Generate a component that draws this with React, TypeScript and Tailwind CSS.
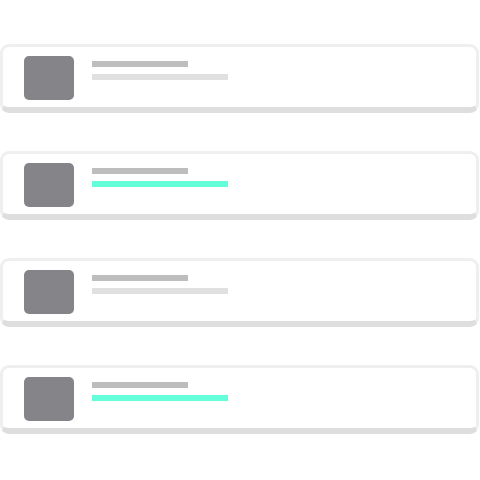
const ROWS = [
  { accent: false },
  { accent: true },
  { accent: false },
  { accent: true },
];

function SkeletonCard({ accent }: { accent: boolean }) {
  return (
    <div className="flex w-[479px] items-start rounded-[9px] border-[3px] border-b-[6px] border-[#efefef] border-b-[#dedede] bg-white pb-[7px] pl-[21px] pt-[9px]">
      <div className="h-[44px] w-[50px] shrink-0 rounded-[5px] bg-[#858489]" />
      <div className="ml-[18px] mt-[5px] flex flex-col gap-[7px]">
        <div className="h-[6px] w-[96px] bg-[#bdbdbd]" />
        <div className={accent ? 'h-[6px] w-[136px] bg-[#64ffda]' : 'h-[6px] w-[136px] bg-[#e0e0e0]'} />
      </div>
    </div>
  );
}

export default function App() {
  return (
    <div className="h-[480px] w-[480px] overflow-hidden bg-white pt-[44px]">
      <div className="flex flex-col gap-[38px]">
        {ROWS.map((r, i) => (
          <SkeletonCard key={i} accent={r.accent} />
        ))}
      </div>
    </div>
  );
}
